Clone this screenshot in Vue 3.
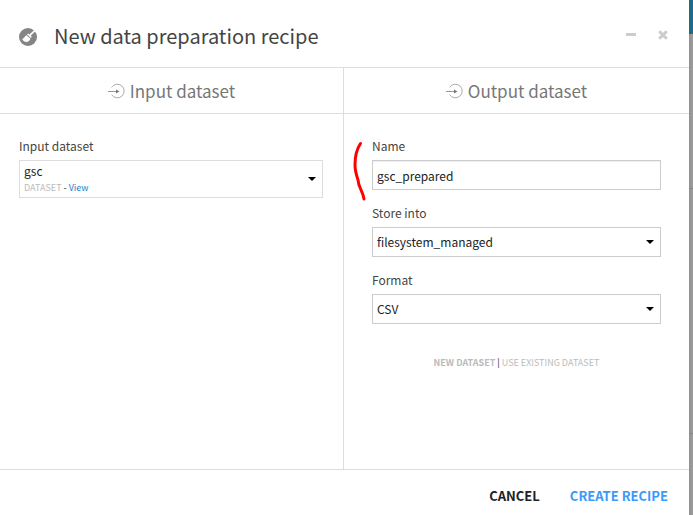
<script setup>
import { ref } from 'vue'

const dataset = ref('gsc')
const name = ref('gsc_prepared')
const store = ref('filesystem_managed')
const format = ref('CSV')
</script>

<template>
  <div class="page">
    <main class="dialog">
      <header class="header">
        <svg class="badge" viewBox="0 0 18 18" aria-hidden="true">
          <circle cx="9" cy="9" r="9" fill="#858585" />
          <path d="M15.5 2.8 11 7.2" stroke="#fff" stroke-width="1.7" stroke-linecap="round" />
          <path d="M9.2 5.4 12.8 8.8 11.8 10 8 6.6Z" fill="#fff" />
          <path d="M7.4 7.2 11.4 10.8C10.8 12.6 9.6 13.6 7.6 14.2L6.4 13.6 5.6 14 5.2 13 4 12.8 4.2 11.8 2.8 11.2C4.8 10.6 5.6 8.2 7.4 7.2Z" fill="#fff" />
        </svg>
        <h1>New data preparation recipe</h1>
        <button class="tool" type="button" aria-label="Minimize">
          <svg viewBox="0 0 12 12"><path d="M1 5.5H11" stroke="#ccc" stroke-width="3" /></svg>
        </button>
        <button class="tool" type="button" aria-label="Close">
          <svg viewBox="0 0 12 12"><path d="M2.2 2.2 9.8 9.8M9.8 2.2 2.2 9.8" stroke="#ccc" stroke-width="3" /></svg>
        </button>
      </header>

      <div class="columns">
        <section class="column">
          <h2>
            <svg class="arrow-in" viewBox="0 0 17 16" aria-hidden="true">
              <path d="M3.6 4.4A6.8 6.8 0 1 1 3.6 11.6" fill="none" stroke="#aaa" />
              <path d="M0 8.5H9" stroke="#999" />
              <path d="M8 6.5 11.4 8.5 8 10.5Z" fill="#777" />
            </svg>
            Input dataset
          </h2>
          <div class="body">
            <div class="field">
              <label for="dataset">Input dataset</label>
              <div class="select tall">
                <select id="dataset" v-model="dataset"><option>gsc</option></select>
                <p class="meta"><span>DATASET</span> - <a href="#view">View</a></p>
                <svg class="caret" viewBox="0 0 8 4" aria-hidden="true"><path d="M0 0H8L4 4Z" /></svg>
              </div>
            </div>
          </div>
        </section>

        <section class="column output">
          <h2>
            <svg class="arrow-in" viewBox="0 0 17 16" aria-hidden="true">
              <path d="M3.6 4.4A6.8 6.8 0 1 1 3.6 11.6" fill="none" stroke="#aaa" />
              <path d="M0 8.5H9" stroke="#999" />
              <path d="M8 6.5 11.4 8.5 8 10.5Z" fill="#777" />
            </svg>
            Output dataset
          </h2>
          <div class="body">
            <div class="field">
              <label for="name">Name</label>
              <input id="name" v-model="name" type="text" />
              <svg class="mark" viewBox="0 0 20 68" aria-hidden="true">
                <path d="M10.5 6.5C6 13 5 20 5 28C5 34 6.5 38 8 43C8.5 51 13 54 14 62" />
              </svg>
            </div>
            <div class="field">
              <label for="store">Store into</label>
              <div class="select">
                <select id="store" v-model="store"><option>filesystem_managed</option></select>
                <svg class="caret" viewBox="0 0 8 4" aria-hidden="true"><path d="M0 0H8L4 4Z" /></svg>
              </div>
            </div>
            <div class="field">
              <label for="format">Format</label>
              <div class="select">
                <select id="format" v-model="format"><option>CSV</option></select>
                <svg class="caret" viewBox="0 0 8 4" aria-hidden="true"><path d="M0 0H8L4 4Z" /></svg>
              </div>
            </div>
            <p class="switch"><a class="current" href="#new">NEW DATASET</a> | <a href="#existing">USE EXISTING DATASET</a></p>
          </div>
        </section>
      </div>

      <footer class="footer">
        <button type="button">CANCEL</button>
        <button class="primary" type="button">CREATE RECIPE</button>
      </footer>
    </main>

    <div class="backdrop" aria-hidden="true">
      <div class="bar"></div>
      <div class="row first"></div>
      <div class="row second"></div>
    </div>
  </div>
</template>

<style>
body {
  margin: 0;
}
</style>

<style scoped>
.page,
.page * {
  box-sizing: border-box;
}
.page {
  display: grid;
  grid-template-columns: 1fr 4px;
  min-height: 100vh;
  font-family: "Noto Sans CJK SC", "Open Sans", sans-serif;
  font-size: 12px;
  line-height: 20px;
  color: #222;
}
h1,
h2,
p {
  margin: 0;
}
button,
input,
select {
  font: inherit;
  color: inherit;
  border-radius: 0;
}
a {
  text-decoration: none;
}
.dialog {
  display: flex;
  flex-direction: column;
  background: #fff;
}
.header {
  display: flex;
  align-items: center;
  height: 68px;
  padding: 6px 19px 0;
  border-bottom: 1px solid #ddd;
}
.badge {
  width: 18px;
  height: 18px;
  margin-right: 17px;
}
h1 {
  flex: 1;
  padding-bottom: 2px;
  font-size: 20px;
  font-weight: 400;
  line-height: 28px;
  color: #444;
}
.tool {
  display: flex;
  margin-left: 18px;
  padding: 0 1px 4px;
  border: 0;
  background: none;
}
.tool svg {
  width: 12px;
  height: 12px;
}
.columns {
  flex: 1;
  display: grid;
  grid-template-columns: 343fr 346fr;
}
.output {
  border-left: 1px solid #ddd;
}
h2 {
  display: flex;
  align-items: center;
  justify-content: center;
  gap: 5px;
  height: 46px;
  padding-top: 1px;
  border-bottom: 1px solid #ddd;
  font-size: 17px;
  font-weight: 400;
  color: #777;
}
.arrow-in {
  width: 17px;
  height: 16px;
}
.body {
  display: flex;
  flex-direction: column;
  gap: 13px;
  padding: 22px 20px 24px 19px;
}
.output .body {
  padding: 22px 28px 24px;
}
.field {
  position: relative;
  display: flex;
  flex-direction: column;
  gap: 4px;
}
label {
  color: #444;
}
input,
select {
  width: 100%;
  height: 30px;
  padding: 0 4px;
  border: 1px solid #ccc;
  background: #fff;
}
input {
  box-shadow: inset 0 1px 1px #eee;
}
.select {
  display: grid;
}
.select > * {
  grid-area: 1 / 1;
}
select {
  appearance: none;
}
.tall select {
  height: 38px;
  padding-bottom: 16px;
  border-color: #ddd;
}
.caret {
  place-self: center end;
  width: 8px;
  height: 4px;
  margin-right: 7px;
  pointer-events: none;
}
.meta {
  place-self: end start;
  padding: 0 5px 3px;
  font-size: 9px;
  line-height: 14px;
}
.meta span {
  color: #bbb;
}
.meta a {
  color: #1a83c9;
}
.mark {
  position: absolute;
  top: 1px;
  left: -22px;
  width: 20px;
  height: 68px;
  fill: none;
  stroke: #f00;
  stroke-width: 3;
  stroke-linecap: round;
}
.switch {
  padding-top: 16px;
  text-align: center;
  font-size: 9px;
}
.switch a {
  color: #bbb;
}
.switch .current {
  font-weight: 700;
}
.footer {
  display: flex;
  align-items: center;
  justify-content: flex-end;
  gap: 30px;
  height: 46px;
  padding: 6px 21px 0;
  border-top: 1px solid #ddd;
}
.footer button {
  padding: 0;
  border: 0;
  background: none;
  font-size: 13px;
  font-weight: 700;
}
.footer .primary {
  color: #3b99fc;
}
.backdrop {
  background: linear-gradient(to right, #909090, #9e9e9e);
}
.bar {
  height: 34px;
  background: #1f6a87;
}
.row {
  border-bottom: 1px solid #858585;
}
.first {
  height: 155px;
}
.second {
  height: 245px;
}
</style>
